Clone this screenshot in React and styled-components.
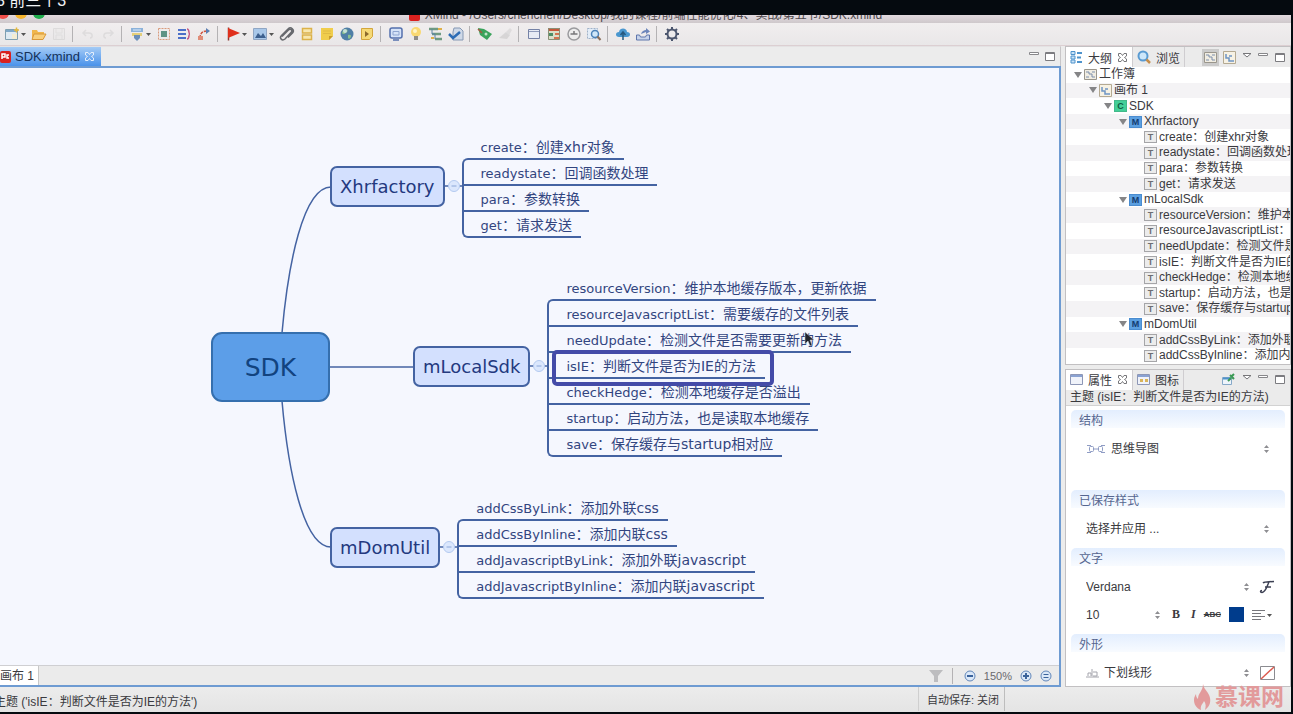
import React from "react";
import styled, { createGlobalStyle, css } from "styled-components";

const UI_FONT = `"Liberation Sans", "Noto Sans CJK SC", sans-serif`;
const MAP_FONT = `"DejaVu Sans", "Noto Sans CJK SC", sans-serif`;
const INK = "#4463a2";

const GlobalStyle = createGlobalStyle`
  * { box-sizing: border-box; }
  body { margin: 0; background: #050a0f; font-family: ${UI_FONT}; font-size: 12px; color: #3a3a3e; }
  button, select { font: inherit; color: inherit; border: 0; padding: 0; margin: 0; background: none; }
  svg { display: block; flex: none; }
`;

/* ---------- frame ---------- */
const Page = styled.div`
  height: 100vh;
  display: flex;
  flex-direction: column;
  padding: 0 2px 2px 0;
  overflow: hidden;
`;
const Caption = styled.div`
  flex: none;
  height: 15px;
  display: flex;
  align-items: flex-end;
  overflow: hidden;
  color: #f2f4f6;
  font-size: 16px;
  line-height: 20px;
  white-space: pre;
  padding-bottom: 4px;
  text-indent: -4px;
`;
const Window = styled.div`
  flex: 1;
  min-height: 0;
  display: flex;
  flex-direction: column;
  background: #ececec;
`;
const TitleBar = styled.header`
  flex: none;
  height: 8px;
  display: grid;
  grid-template-columns: 1fr auto 1fr;
  align-items: end;
  align-content: end;
  overflow: hidden;
  background: linear-gradient(#e2dadf, #cec8cb);
`;
const Lights = styled.div`
  display: flex;
  gap: 6px;
  padding-bottom: 4px;
  margin-left: -3px;
`;
const Light = styled.span`
  width: 12px;
  height: 12px;
  border-radius: 50%;
  background: ${(p) => p.$color};
`;
const Title = styled.div`
  display: flex;
  align-items: center;
  gap: 5px;
  line-height: 16px;
  color: #4e484c;
  white-space: nowrap;
`;
const DocBadge = styled.span`
  display: flex;
  align-items: center;
  justify-content: center;
  flex: none;
  width: 11px;
  height: 12px;
  border-radius: 2px;
  background: #d9211f;
`;
const Toolbar = styled.nav`
  flex: none;
  height: 23px;
  display: flex;
  align-items: center;
  gap: 4px;
  padding-left: 4px;
  background: linear-gradient(#f1eeef, #e9e7e8);
  border-bottom: 1px solid #dccfd2;
`;
const ToolButton = styled.button`
  display: flex;
  align-items: center;
  opacity: ${(p) => (p.disabled ? 0.3 : 1)};
`;
const Separator = styled.span`
  width: 2px;
  height: 16px;
  margin-right: 3px;
  border-right: 1px solid #b4b2b4;
`;
const Main = styled.main`
  flex: 1;
  min-height: 0;
  display: flex;
  gap: 4px;
`;

/* ---------- editor ---------- */
const Editor = styled.section`
  flex: 1;
  min-width: 0;
  display: flex;
  flex-direction: column;
`;
const EditorTabs = styled.div`
  flex: none;
  height: 20px;
  display: flex;
  align-items: center;
  justify-content: space-between;
  border-top: 1px solid #e4e2e3;
  border-right: 1px solid #c8c6c8;
`;
const FileTab = styled.button`
  align-self: stretch;
  display: flex;
  align-items: center;
  gap: 4px;
  padding-right: 6px;
  font-size: 13px;
  color: #143158;
  background: linear-gradient(#a4cbf6, #4a92ea);
`;
const PartButtons = styled.div`
  display: flex;
  align-items: center;
  gap: 5px;
  padding-right: 4px;
`;
const IconButton = styled.button`
  display: flex;
  align-items: center;
  justify-content: center;
  ${(p) => p.$on && css`background: #cbcbcb; outline: 2px solid #cbcbcb;`}
`;
const EditorBody = styled.div`
  flex: 1;
  min-height: 0;
  display: flex;
  flex-direction: column;
  border: 2px solid #6e9bd2;
  border-left: 0;
`;
const Canvas = styled.div`
  flex: 1;
  position: relative;
  overflow: hidden;
  background: #f5f7fe;
  font-family: ${MAP_FONT};
`;
const Links = styled.svg`
  position: absolute;
  left: 0;
  top: 0;
`;
const nodeBox = css`
  display: flex;
  align-items: center;
  justify-content: center;
  border: 2px solid ${INK};
`;
const RootTopic = styled.div`
  ${nodeBox}
  position: absolute;
  left: 211px;
  top: 264px;
  width: 119px;
  height: 70px;
  border-radius: 11px;
  background: #5c9ee8;
  border-color: #356fae;
  color: #12437f;
  font-size: 25px;
`;
const Branch = styled.div`
  position: absolute;
  left: ${(p) => p.$x}px;
  top: ${(p) => p.$y}px;
  display: flex;
  align-items: center;
`;
const Topic = styled.div`
  ${nodeBox}
  height: 41px;
  padding: 0 8px;
  border-radius: 7px;
  background: #d3e0fe;
  color: #24397f;
  font-size: 18px;
`;
const Fold = styled.button`
  display: flex;
  width: 17px;
`;
const Leaves = styled.ul`
  position: relative;
  margin: 0;
  padding: 0;
  list-style: none;
  &::before {
    content: "";
    position: absolute;
    left: 0;
    top: 24px;
    bottom: 0;
    width: 8px;
    border: 2px solid ${INK};
    border-right: 0;
    border-radius: 6px 0 0 6px;
  }
`;
const Leaf = styled.li`
  position: relative;
  width: fit-content;
  height: 26px;
  padding: 0 9px 0 19px;
  line-height: 27px;
  white-space: nowrap;
  color: #32457f;
  font-size: 14px;
  &::after {
    content: "";
    position: absolute;
    left: ${(p) => (p.$edge ? 6 : 0)}px;
    right: 0;
    bottom: 0;
    height: 2px;
    background: ${INK};
  }
`;
const LeafKey = styled.span`
  font-size: 13px;
`;
const Selection = styled.span`
  position: absolute;
  inset: -3px -9px -7px 5px;
  z-index: 1;
  border: 4px solid #444ba8;
  border-radius: 5px;
`;
const Pointer = styled.svg`
  position: absolute;
  left: 804px;
  top: 263px;
`;
const SheetBar = styled.div`
  flex: none;
  height: 20px;
  display: flex;
  align-items: stretch;
  justify-content: space-between;
  background: #ebebeb;
  border-top: 1px solid #cfcfd2;
`;
const SheetTab = styled.button`
  padding-right: 4px;
  background: #fff;
  border-right: 1px solid #c8c8c8;
  line-height: 18px;
`;
const ZoomBar = styled.div`
  display: flex;
  align-items: center;
  gap: 8px;
  padding-right: 7px;
  color: #6a6a6e;
`;
const Percent = styled.span`
  font-size: 11px;
`;

/* ---------- side bar ---------- */
const Side = styled.aside`
  flex: none;
  width: 226px;
  display: flex;
  flex-direction: column;
  gap: 4px;
`;
const Panel = styled.section`
  flex: 1 1 0;
  min-height: 0;
  display: flex;
  flex-direction: column;
  border: 1px solid #c2c0c2;
  background: #fff;
`;
const PanelTabs = styled.div`
  flex: none;
  height: 20px;
  display: flex;
  align-items: stretch;
  background: #ebebeb;
`;
const PanelTab = styled.button`
  display: flex;
  align-items: center;
  gap: 5px;
  padding: 0 4px;
  background: ${(p) => (p.$active ? "#fff" : "transparent")};
  border-right: 1px solid #cfcdd0;
`;
const PanelTools = styled.div`
  margin-left: auto;
  display: flex;
  align-items: center;
  gap: 6px;
  padding-right: 4px;
`;
const Tree = styled.ul`
  flex: 1;
  min-height: 0;
  margin: 0;
  padding: 0;
  list-style: none;
  display: grid;
  grid-auto-rows: 1fr;
  overflow: hidden;
`;
const TreeRow = styled.li`
  display: flex;
  align-items: center;
  gap: 2px;
  min-height: 0;
  padding-left: ${(p) => p.$depth * 15 + 8}px;
  line-height: 15px;
  white-space: nowrap;
  overflow: hidden;
  &:nth-child(even) { background: #f4f3f5; }
`;
const TypeBox = styled.span`
  flex: none;
  display: flex;
  align-items: center;
  justify-content: center;
  width: 13px;
  height: 12px;
  font-size: 9px;
  font-weight: bold;
  line-height: 12px;
  color: ${(p) => p.$ink};
  background: ${(p) => p.$fill};
  border: 1px solid ${(p) => p.$line};
`;
const Subject = styled.h2`
  flex: none;
  margin: 0;
  padding-left: 4px;
  font-size: 12px;
  font-weight: normal;
  line-height: 15px;
  background: #ebebeb;
  border-bottom: 1px solid #d2d2d2;
  white-space: nowrap;
`;
const Sections = styled.div`
  flex: 1;
  min-height: 0;
  overflow: hidden;
  padding: 4px 5px 0;
`;
const Section = styled.section`
  margin-bottom: ${(p) => (p.$roomy ? 22 : 0)}px;
  padding-bottom: 5px;
`;
const SectionTitle = styled.h3`
  margin: 0 0 7px;
  height: 18px;
  padding-left: 8px;
  font-size: 12px;
  font-weight: normal;
  line-height: 22px;
  color: #566690;
  border-radius: 5px 5px 0 0;
  background: linear-gradient(#e3eefe, #f8fbff);
`;
const Field = styled.div`
  height: 28px;
  display: flex;
  align-items: center;
  gap: 8px;
  padding: 0 ${(p) => (p.$wide ? 15 : 9)}px 0 15px;
`;
const Picker = styled.label`
  flex: ${(p) => (p.$fixed ? "none" : 1)};
  width: ${(p) => (p.$fixed ? "75px" : "auto")};
  min-width: 0;
  display: flex;
  align-items: center;
  gap: 5px;
`;
const Choice = styled.select`
  flex: 1;
  min-width: 0;
  appearance: none;
  outline: none;
`;
const Swatch = styled.button`
  width: 15px;
  height: 15px;
  && { background: #003c8c; }
`;
const TextButton = styled.button`
  && {
    font-size: ${(p) => p.$size}px;
    font-weight: bold;
    font-style: ${(p) => (p.$italic ? "italic" : "normal")};
    text-decoration: ${(p) => (p.$strike ? "line-through" : "none")};
    font-family: ${(p) => (p.$serif ? `"Liberation Serif", serif` : "inherit")};
  }
`;

/* ---------- status ---------- */
const Status = styled.footer`
  position: relative;
  flex: none;
  height: 25px;
  display: flex;
  align-items: center;
  padding-bottom: 1px;
  background: linear-gradient(#ececec, #e4e4e4);
`;
const StatusText = styled.span`
  flex: 1;
  margin-left: -6px;
  padding-top: 3px;
`;
const AutoSave = styled.span`
  align-self: stretch;
  width: 87px;
  margin-right: 286px;
  padding-left: 8px;
  border-left: 1px solid #cfcfcf;
  border-right: 1px solid #bdbdbd;
  font-size: 11px;
  line-height: 27px;
`;
const Watermark = styled.div`
  position: absolute;
  right: 7px;
  bottom: 1px;
  display: flex;
  align-items: center;
  gap: 4px;
  color: #e29a9b;
  font-size: 23px;
  font-weight: bold;
  line-height: 28px;
`;

/* ---------- icons ---------- */
const S = ({ w = 16, h = 16, children }) => (
  <svg width={w} height={h} viewBox={`0 0 ${w} ${h}`} fill="none" aria-hidden="true">{children}</svg>
);
const Caret = () => <S w={7} h={16}><path d="M1 7h5l-2.5 3z" fill="#555" /></S>;
const icons = {
  new: <S><path d="M1.500 3.500h12v10h-12z" fill="#dfeaf2" stroke="#7f9fb0" /><path d="M2 4h11v2H2z" fill="#7fa8c8" /><path d="M8 8h5v5H8z" fill="#f3ecd2" /><path d="M12.500 1.500v5M10 4h5" stroke="#e6b93c" strokeWidth="1.500" /></S>,
  open: <S><path d="M1 4h5l1 2h6v7H1z" fill="#f0b64c" /><path d="M3 8h12l-3 5.500H1z" fill="#f9cf7c" stroke="#d9983a" /></S>,
  save: <S><path d="M2.500 2.500h11v11h-11z" fill="#e6e6e6" stroke="#b8b8b8" /><path d="M5 3v4h6V3M5 13v-4h6v4" stroke="#c4c4c4" /></S>,
  undo: <S><path d="M6 4L3 7l3 3M3 7h6c4 0 4 5 1 5" stroke="#bbb" strokeWidth="1.500" /></S>,
  redo: <S><path d="M10 4l3 3-3 3M13 7H7c-4 0-4 5-1 5" stroke="#bbb" strokeWidth="1.500" /></S>,
  topic: <S><path d="M2 2h12v4H2z" fill="#8cb2da" /><path d="M3 7h10v3H3z" fill="#e3cf7c" /><path d="M5 9h6v3l-3 3-3-3z" fill="#6b8fba" /><path d="M4 4h8" stroke="#dcebfa" /></S>,
  boundary: <S><rect x="2.500" y="2.500" width="11" height="11" stroke="#d99b7c" strokeDasharray="2 1" /><path d="M5 5h6v6H5z" fill="#5f9385" /></S>,
  summary: <S><path d="M2 4h8M2 8h8M2 12h8" stroke="#4c6fc8" strokeWidth="2" /><path d="M11 3c3 0 1 5 3 5-2 0 0 5-3 5" stroke="#c45a86" strokeWidth="1.500" /></S>,
  relation: <S><path d="M4 12C4 7 7 5 11 5" stroke="#d0533e" strokeWidth="1.500" strokeDasharray="3 1" /><path d="M10 2l4 3-4 3z" fill="#5d7fb2" /><path d="M2 10h5v4H2z" fill="#e08c78" /></S>,
  flag: <S><path d="M3.500 1.500v13" stroke="#8c3b34" strokeWidth="1.500" /><path d="M3 2l12 5L3 12z" fill="#e0301c" /></S>,
  image: <S><path d="M1.500 2.500h13v11h-13z" fill="#a9c8ea" stroke="#90a6c4" /><path d="M3 12l3-5 3 3 2-3 3 5z" fill="#3d608f" /></S>,
  clip: <S><path d="M3 10.500L9.500 4c2-2 4.500.5 2.500 2.500L6 13c-3 2.500-6-1-3.500-3.500L9 3c3-3 7 1 4.500 4L9 11.500" stroke="#67696e" strokeWidth="1.500" /></S>,
  label: <S><path d="M3.500 2.500h9v4.500h-9zM3.500 9h9v4.500h-9z" fill="#f8e7ae" stroke="#dcb24a" strokeWidth="1.500" /></S>,
  note: <S><path d="M2 2h12v8l-4 4H2z" fill="#f0cd4c" /><path d="M10 14v-4h4z" fill="#c79b2b" /><path d="M4 5h8M4 7.500h8" stroke="#e0bb44" /></S>,
  globe: <S><circle cx="8" cy="8" r="6.500" fill="#507fa6" /><path d="M4 4c3-2 6 0 4 2S4 9 3 7zM9 9c3-1 4 1 2 3.500H9z" fill="#8bc08c" /><circle cx="6" cy="5" r="2" fill="#e3f0f8" opacity=".7" /></S>,
  audio: <S><path d="M2.500 2.500h11v8l-3 3h-8z" fill="#f5d977" stroke="#d3a63c" /><path d="M6 5l4 3-4 3z" fill="#8b6a2c" /></S>,
  present: <S><rect x="2" y="2" width="12" height="10" rx="2" fill="#d6e3f8" stroke="#5470ad" strokeWidth="1.500" /><path d="M5 5.500h6v3.500H5z" stroke="#8fa5d0" /><path d="M5 14h6" stroke="#5470ad" strokeWidth="1.500" /></S>,
  bulb: <S><circle cx="8" cy="6" r="5" fill="#f9d871" /><path d="M6 10h4v4H6z" fill="#8f8d88" /><circle cx="7" cy="5" r="2" fill="#fff4c4" /></S>,
  gantt: <S><path d="M1 3h9M4 8h9M7 13h7" stroke="#6f9a82" strokeWidth="2.500" /><path d="M10 3h4M3 12h3" stroke="#dfb048" strokeWidth="2" /><path d="M4 3v5h3v5" stroke="#5a82a4" /></S>,
  task: <S><path d="M6 2h6l3 3v9H5V6z" fill="#cfd9e8" stroke="#8598b4" /><path d="M1 8l4 4 7-6" stroke="#2d6cb5" strokeWidth="2.500" /></S>,
  tag: <S><path d="M1 2l6 1 8 5-5 6-7-5z" fill="#3aa35b" /><path d="M1 3l4 4" stroke="#a35a42" strokeWidth="1.500" /><circle cx="9" cy="8" r="1.500" fill="#bfe6c8" /></S>,
  brush: <S><path d="M2 12l7-6 4 3-3 4z" fill="#a8a8a8" /><path d="M9 6l4-4 2 2-3 5z" fill="#bbb" /></S>,
  sheet: <S><path d="M2.500 3.500h11v9h-11z" fill="#e7ebf5" stroke="#7582a6" /><path d="M3 5.500h10" stroke="#8f9bbb" /></S>,
  calendar: <S><path d="M2 2h12v12H2z" fill="#d9dfc8" /><path d="M2 2h12v3H2z" fill="#c5583b" /><path d="M3 7h4v3H3z" fill="#4d8d66" /><path d="M9 7h4v2H9zM8 11h5v2H8z" fill="#d37450" /><path d="M2.500 2.500h11v11h-11z" stroke="#8a8f76" /></S>,
  clock: <S><circle cx="8" cy="8" r="6" fill="#ededed" stroke="#9b9b9e" strokeWidth="1.500" /><path d="M4.500 8h7M8 8V5" stroke="#77777a" strokeWidth="1.500" /></S>,
  find: <S><path d="M1.500 2.500h10v10h-10z" fill="#e3edf8" stroke="#a0b2c8" strokeDasharray="2 1" /><circle cx="9" cy="8" r="3.500" fill="#cfe6f8" stroke="#4c82b8" strokeWidth="1.500" /><path d="M11.500 10.500l3 3.500" stroke="#8b6f5b" strokeWidth="2" /></S>,
  cloud: <S><path d="M4 11C0 11 0 6 4 6c1-5 8-4 8 0 4 0 4 5 0 5z" fill="#4a97cf" /><path d="M8 14V7M5.500 9L8 6l2.500 3" stroke="#27597f" strokeWidth="1.500" /></S>,
  share: <S><path d="M1.500 9v5h13V9h-3l-1 2h-5l-1-2z" fill="#c7d3ea" stroke="#5f76ac" /><path d="M6 8c1-3 3-4 5-4V2l4 3.500L11 8V6" fill="#6d86bb" /></S>,
  gear: <S><circle cx="8" cy="8" r="4.500" stroke="#4c566e" strokeWidth="2" /><path d="M8 1v3M8 12v3M1 8h3M12 8h3M3 3l2 2M11 11l2 2M13 3l-2 2M5 11l-2 2" stroke="#4c566e" strokeWidth="2" /></S>,
};
const Close = ({ c = "#77777a" }) => (
  <S w={11} h={11}><path d="M1.500 1.500h2.500l1.500 2 1.500-2h2.500v2.500l-2 1.500 2 1.500v2.500H7l-1.500-2-1.500 2H1.500V7l2-1.500-2-1.500z" stroke={c} /></S>
);
const Minimize = () => <S w={11} h={11}><path d="M.5 1.500h9v2h-9z" stroke="#87878a" fill="#fff" /></S>;
const Maximize = () => <S w={11} h={11}><path d="M.5 1.500h9v8h-9zM.5 2.500h9" stroke="#7c7c80" fill="#fff" /></S>;
const MenuArrow = () => <S w={10} h={11}><path d="M1 1.500h8L5 5z" stroke="#77777a" fill="#fff" /></S>;
const Book = () => <S w={13} h={13}><path d="M.5 1.500h12v10H.5z" fill="#f1ede2" stroke="#9a968c" /><path d="M2 4h3v2h3v3h3M8 4h3M2 9h3" stroke="#7c8fac" /></S>;
const SheetIcon = () => <S w={13} h={13}><path d="M.5.5h12v12H.5z" fill="#f7f2e4" stroke="#b5aa92" /><path d="M3 3v4h3v3h5M6 5h3" stroke="#6f95c4" strokeWidth="1.500" /></S>;
const Outline = () => <S w={13} h={14}><path d="M1 1.500h4v3H1zM1 6h4v3H1zM1 10h4v3H1z" fill="#cbe3f7" stroke="#4f93cc" /><path d="M7 3h5M7 7.500h4M7 12h5" stroke="#4f93cc" strokeWidth="2" /></S>;
const Magnifier = () => <S w={14} h={14}><circle cx="6" cy="6" r="4.500" fill="#cde7fa" stroke="#5a9bd2" strokeWidth="2" /><path d="M9.500 9.500l3.500 3.500" stroke="#c58e4c" strokeWidth="2.500" /></S>;
const Props = ({ warm }) => <S w={13} h={11}><path d="M.5.5h12v10H.5z" fill="#f0f3fa" stroke="#8d97b6" /><path d="M1 2h11" stroke="#8aa2d2" strokeWidth="2" />{warm && <path d="M3 5h3v3H3zM8 5h3v3H8z" fill="#d9b45a" />}</S>;
const Twisty = () => <S w={8} h={8}><path d="M0 1h8L4 7z" fill="#858587" /></S>;
const Stepper = () => <S w={7} h={10}><path d="M1 4l2.500-3L6 4zM1 6l2.500 3L6 6z" fill="#8e8e92" /></S>;
const RoundTool = ({ kind }) => (
  <S w={12} h={12}><circle cx="6" cy="6" r="5" fill="#dbe8f8" stroke="#6287ba" />
    <path d={kind === "in" ? "M3 6h6M6 3v6" : kind === "out" ? "M3 6h6" : "M3.500 4.500h5M3.500 7.500h5"} stroke="#3b639b" strokeWidth={kind === "fit" ? 1 : 2} /></S>
);

/* ---------- data ---------- */
const TOOLS = [
  ["new", "caret"], ["open"], ["save", "off"], "|", ["undo", "off"], ["redo", "off"], "|",
  ["topic", "caret"], ["boundary"], ["summary"], ["relation"], "|",
  ["flag", "caret"], ["image", "caret"], ["clip"], ["label"], ["note"], ["globe"], ["audio"], "|",
  ["present"], ["bulb"], ["gantt"], ["task"], "|", ["tag"], ["brush", "off"], "|",
  ["sheet"], ["calendar"], ["clock"], ["find"], "|", ["cloud"], ["share"], "|", ["gear"],
];
const BRANCHES = [
  { name: "Xhrfactory", x: 330, y: 66, leaves: [["create", "创建xhr对象"], ["readystate", "回调函数处理"], ["para", "参数转换"], ["get", "请求发送"]] },
  { name: "mLocalSdk", x: 413, y: 207, leaves: [["resourceVersion", "维护本地缓存版本，更新依据"], ["resourceJavascriptList", "需要缓存的文件列表"], ["needUpdate", "检测文件是否需要更新的方法"], ["isIE", "判断文件是否为IE的方法", true], ["checkHedge", "检测本地缓存是否溢出"], ["startup", "启动方法，也是读取本地缓存"], ["save", "保存缓存与startup相对应"]] },
  { name: "mDomUtil", x: 330, y: 427, leaves: [["addCssByLink", "添加外联css"], ["addCssByInline", "添加内联css"], ["addJavascriptByLink", "添加外联javascript"], ["addJavascriptByInline", "添加内联javascript"]] },
];
const OUTLINE = [
  { depth: 0, kind: "book", text: "工作簿" },
  { depth: 1, kind: "sheet", text: "画布 1" },
  { depth: 2, kind: "C", text: "SDK" },
  ...BRANCHES.flatMap((b) => [
    { depth: 3, kind: "M", text: b.name },
    ...b.leaves.map(([k, v]) => ({ depth: 4, kind: "T", text: `${k}：${v}` })),
  ]),
].slice(0, 19);
const TYPES = {
  C: { $fill: "#43cf98", $line: "#43b98a", $ink: "#0f5c40" },
  M: { $fill: "#5b9fe0", $line: "#4a8cd0", $ink: "#123c70" },
  T: { $fill: "#ececec", $line: "#a5a5a8", $ink: "#6d6d72" },
};

function Kind({ kind }) {
  if (kind === "book") return <Book />;
  if (kind === "sheet") return <SheetIcon />;
  return <TypeBox {...TYPES[kind]}>{kind}</TypeBox>;
}

function Dropdown({ label, value, icon, fixed }) {
  return (
    <Picker $fixed={fixed}>
      {icon}
      <Choice aria-label={label} defaultValue={value}><option>{value}</option></Choice>
      <Stepper />
    </Picker>
  );
}

function MindMap() {
  return (
    <Canvas>
      <Links width="500" height="580" viewBox="0 0 500 580" fill="none" stroke={INK} strokeWidth="1.500">
        <path d="M282 265C288 197 303 119 331 119" />
        <path d="M329 299H414" />
        <path d="M282 333C288 401 303 479 331 479" />
      </Links>
      <RootTopic>SDK</RootTopic>
      {BRANCHES.map((b) => (
        <Branch key={b.name} $x={b.x} $y={b.y}>
          <Topic>{b.name}</Topic>
          <Fold aria-label={`收起 ${b.name}`}>
            <S w={17} h={14}>
              <path d="M0 7h17" stroke={INK} strokeWidth="1.500" />
              <circle cx="9" cy="7" r="5.500" fill="#dbe7fd" stroke="#b4caf0" />
              <path d="M6.500 7h5" stroke="#8aa6d8" />
            </S>
          </Fold>
          <Leaves>
            {b.leaves.map(([k, v, on], i) => (
              <Leaf key={k} $edge={i === 0 || i === b.leaves.length - 1}>
                <LeafKey>{k}</LeafKey>：{v}
                {on && <Selection />}
              </Leaf>
            ))}
          </Leaves>
        </Branch>
      ))}
      <Pointer width="12" height="17" viewBox="0 0 12 17"><path d="M1 1v12l3-3 2 5 2-1-2-5h4z" fill="#20242c" stroke="#c9cede" strokeWidth=".5" /></Pointer>
    </Canvas>
  );
}

export default function App() {
  return (
    <Page>
      <GlobalStyle />
      <Caption>3 前三个3</Caption>
      <Window>
        <TitleBar>
          <Lights><Light $color="#ee4f4b" /><Light $color="#f5b52e" /><Light $color="#1fac4c" /></Lights>
          <Title><DocBadge />XMind - /Users/chenchen/Desktop/我的课程/前端性能优化/4、实战/第五节/SDK.xmind</Title>
        </TitleBar>
        <Toolbar>
          {TOOLS.map((t, i) =>
            t === "|" ? <Separator key={i} /> : (
              <ToolButton key={i} aria-label={t[0]} disabled={t[1] === "off"}>
                {icons[t[0]]}{t[1] === "caret" && <Caret />}
              </ToolButton>
            )
          )}
        </Toolbar>
        <Main>
          <Editor>
            <EditorTabs>
              <FileTab>
                <DocBadge><S w={9} h={9}><path d="M1 7V2h3v3H1M8 3H6v3h2" stroke="#fff" strokeWidth="1.500" /></S></DocBadge>
                SDK.xmind <Close c="#e4eefb" />
              </FileTab>
              <PartButtons>
                <IconButton aria-label="最小化"><Minimize /></IconButton>
                <IconButton aria-label="最大化"><Maximize /></IconButton>
              </PartButtons>
            </EditorTabs>
            <EditorBody>
              <MindMap />
              <SheetBar>
                <SheetTab>画布 1</SheetTab>
                <ZoomBar>
                  <IconButton aria-label="筛选"><S w={14} h={14}><path d="M0 1h14L9 7v6H5V7z" fill="#bdbdbf" /></S></IconButton>
                  <Separator />
                  <IconButton aria-label="缩小"><RoundTool kind="out" /></IconButton>
                  <Percent>150%</Percent>
                  <IconButton aria-label="放大"><RoundTool kind="in" /></IconButton>
                  <IconButton aria-label="适合窗口"><RoundTool kind="fit" /></IconButton>
                </ZoomBar>
              </SheetBar>
            </EditorBody>
          </Editor>
          <Side>
            <Panel>
              <PanelTabs>
                <PanelTab $active><Outline />大纲<Close /></PanelTab>
                <PanelTab><Magnifier />浏览</PanelTab>
                <PanelTools>
                  <IconButton $on aria-label="工作簿"><Book /></IconButton>
                  <IconButton aria-label="画布"><SheetIcon /></IconButton>
                  <IconButton aria-label="菜单"><MenuArrow /></IconButton>
                  <IconButton aria-label="最小化"><Minimize /></IconButton>
                  <IconButton aria-label="最大化"><Maximize /></IconButton>
                </PanelTools>
              </PanelTabs>
              <Tree>
                {OUTLINE.map((r) => (
                  <TreeRow key={r.text} $depth={r.depth}>
                    {r.depth < 4 ? <Twisty /> : <S w={8} h={8} />}
                    <Kind kind={r.kind} />
                    {r.text}
                  </TreeRow>
                ))}
              </Tree>
            </Panel>
            <Panel>
              <PanelTabs>
                <PanelTab $active><Props />属性<Close /></PanelTab>
                <PanelTab><Props warm />图标</PanelTab>
                <PanelTools>
                  <IconButton aria-label="固定"><S w={14} h={13}><path d="M.5 4.500h9v7h-9z" fill="#eef4fb" stroke="#86a9c8" /><path d="M1 5.500h8" stroke="#4f93cc" strokeWidth="2" /><path d="M6 8l3-3M8 2l4 4M9 4l3-3" stroke="#3a9a54" strokeWidth="2" /></S></IconButton>
                  <IconButton aria-label="菜单"><MenuArrow /></IconButton>
                  <IconButton aria-label="最小化"><Minimize /></IconButton>
                  <IconButton aria-label="最大化"><Maximize /></IconButton>
                </PanelTools>
              </PanelTabs>
              <Subject>主题 (isIE：判断文件是否为IE的方法)</Subject>
              <Sections>
                <Section $roomy>
                  <SectionTitle>结构</SectionTitle>
                  <Field $wide>
                    <Dropdown label="结构" value="思维导图" icon={<S w={20} h={12}><path d="M1 2.500h4M1 9.500h4M19 2.500h-4M19 9.500h-4M7 6h6" stroke="#8f9cc4" /><rect x="3.500" y="3.500" width="4" height="5" rx="1" stroke="#8f9cc4" /><rect x="12.500" y="3.500" width="4" height="5" rx="1" stroke="#8f9cc4" /></S>} />
                  </Field>
                </Section>
                <Section>
                  <SectionTitle>已保存样式</SectionTitle>
                  <Field $wide><Dropdown label="已保存样式" value="选择并应用 ..." /></Field>
                </Section>
                <Section>
                  <SectionTitle>文字</SectionTitle>
                  <Field>
                    <Dropdown label="字体" value="Verdana" />
                    <IconButton aria-label="字体设置"><S w={18} h={14}><path d="M5 3c2-2 5-1 11-1.500M11 2C9 6 8 12 4 12.500c-2 0-2-2 0-2M7 7h6" stroke="#3b3f52" strokeWidth="1.500" /></S></IconButton>
                  </Field>
                  <Field>
                    <Dropdown fixed label="字号" value="10" />
                    <TextButton $size={12} $serif aria-label="粗体">&nbsp;B&nbsp;</TextButton>
                    <TextButton $size={12} $serif $italic aria-label="斜体">I</TextButton>
                    <TextButton $size={8} $strike aria-label="删除线">ABC</TextButton>
                    <Swatch aria-label="文字颜色" />
                    <IconButton aria-label="对齐"><S w={14} h={12}><path d="M0 1.500h13M0 4.500h9M0 7.500h13M0 10.500h9" stroke="#77777c" /></S><Caret /></IconButton>
                  </Field>
                </Section>
                <Section>
                  <SectionTitle>外形</SectionTitle>
                  <Field>
                    <Dropdown label="外形" value="下划线形" icon={<S w={13} h={10}><path d="M0 9h13M2 8V5h3v3M6 8V1M7 8h4V4H7" stroke="#a4a4ac" /></S>} />
                    <IconButton aria-label="填充颜色"><S w={18} h={14}><path d="M2.500.5h14v13h-14z" fill="#fff" stroke="#8b8b90" /><path d="M3 13L16 1" stroke="#dc5b50" strokeWidth="1.500" /></S></IconButton>
                  </Field>
                </Section>
              </Sections>
            </Panel>
          </Side>
        </Main>
        <Status>
          <StatusText>主题 ('isIE：判断文件是否为IE的方法')</StatusText>
          <AutoSave>自动保存: 关闭</AutoSave>
          <Watermark>
            <S w={17} h={27}><path d="M9 0c1 6 6 8 7 14 1 5-1 9-5 12 1-4 1-6-1-9-1 3-4 4-3 9C2 24 0 20 0 16c0-3 1-4 2-6 0 3 1 4 2 5C4 9 9 7 9 0z" fill="#e29a9b" /></S>
            慕课网
          </Watermark>
        </Status>
      </Window>
    </Page>
  );
}
